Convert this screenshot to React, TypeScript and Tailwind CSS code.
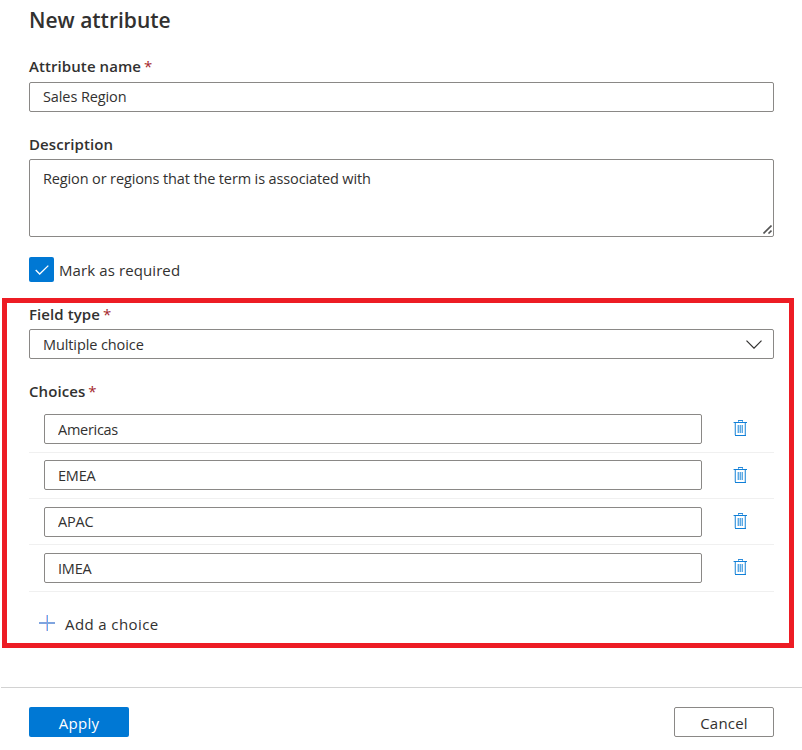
import React from 'react';

const label = "flex h-5 items-center whitespace-pre text-[15px] font-[560] tracking-[0.08px] text-[#323130]";
const field = "block w-full rounded-[2px] border border-[#8a8886] bg-white text-[14.5px] font-[370] text-[#323130] outline-none";

function Star() {
  return <span className="ml-[-1px] font-normal text-[#a4262c]"> *</span>;
}

function Trash() {
  return (
    <svg className="block h-4 w-[14px]" viewBox="0 0 14 16" shapeRendering="crispEdges">
      <path d="M5 0h5v1H5z" fill="#2b8bdb" />
      <path d="M5 1h1v1H5zM9 1h1v1H9z" fill="#69afe5" />
      <path d="M0 2h1v1H0z" fill="#9dcbef" />
      <path d="M1 2h13v1H1z" fill="#0f7fd8" />
      <path d="M1 3h1v12H1zM11 3h1v12h-1z" fill="#c5e0f5" />
      <path d="M2 3h1v12H2zM12 3h1v12h-1z" fill="#4da0e0" />
      <path d="M2 15h11v1H2z" fill="#0f7fd8" />
      <path d="M4 5h6v8H4z" fill="#b9daf4" />
      <path d="M5 5h1v8H5zM7 5h1v8H7zM9 5h1v8H9z" fill="#5ba9e4" />
    </svg>
  );
}

const choices = [
  { name: 'Americas', row: 'h-[39px]', icon: 'mt-[6px]', text: 'pt-px tracking-[-0.28px]' },
  { name: 'EMEA', row: 'h-[46px] pt-[7px]', icon: 'mt-[7px]', text: 'pt-px tracking-[-0.2px]' },
  { name: 'APAC', row: 'h-[46px] pt-[8px]', icon: 'mt-[6px]', text: 'pb-[2px] tracking-[-0.2px]' },
  { name: 'IMEA', row: 'h-[47px] pt-[8px]', icon: 'mt-[6px]', text: 'pt-px tracking-[-0.2px]' },
];

export default function App() {
  return (
    <main className="h-[750px] w-[802px] overflow-hidden bg-white font-['Open_Sans','Noto_Sans',sans-serif] text-[#323130]">
      <div className="h-[298px] pr-[28px] pl-[29px] pt-[5px]">
        <h1 className="h-[30px] text-[21px] leading-[30px] font-[550]">New attribute</h1>
        <div className={label + ' mt-[21px]'}>Attribute name<Star /></div>
        <input className={field + ' mt-[6px] h-[30px] px-[13px] pb-[2px] tracking-[-0.1px]'} defaultValue="Sales Region" />
        <div className={label + ' mt-[22px]'}>Description</div>
        <div className={field + ' relative mt-[5px] h-[78px] px-[13px] pt-[9px] leading-5 tracking-[-0.13px]'}>
          Region or regions that the term is associated with
          <svg className="absolute right-px bottom-[2px] h-[9px] w-[9px]" viewBox="0 0 9 9" stroke="#555" strokeWidth="1.6">
            <path d="M0.500 8.500l8-8M5.500 8.500l3-3" />
          </svg>
        </div>
        <div className="mt-5 flex h-[25px] items-center">
          <span className="flex size-[25px] items-center justify-center rounded-[2px] bg-[#0078d4]">
            <svg className="h-[10px] w-[14px]" viewBox="0 0 14 10" fill="none" stroke="white" strokeWidth="1.3"><path d="M0.700 5l4 4L13.300 0.600" /></svg>
          </span>
          <span className="ml-[5px] mt-[2px] text-[15px] font-[370] tracking-[0.1px]">Mark as required</span>
        </div>
      </div>

      <section className="ml-[2px] h-[350px] w-[792px] border-5 border-[#ed1c24] pr-[15px] pl-[22px]">
        <div className={label + ' mt-px'}>Field type<Star /></div>
        <div className={field + ' mt-[5px] flex h-[30px] items-center justify-between pr-[11px] pl-[13px] tracking-[-0.1px]'}>
          <span className="pt-[2px]">Multiple choice</span>
          <svg className="h-[9px] w-4" viewBox="0 0 16 9" fill="none" stroke="#323130" strokeWidth="1.2"><path d="M0.500 0.700L8 8.200 15.500 0.700" /></svg>
        </div>
        <div className={label + ' mt-[22px]'}>Choices<Star /></div>
        <div className="mt-[13px]">
          {choices.map((c) => (
            <div key={c.name} className={'flex items-start border-b border-[#f0f0f0] pl-[15px] ' + c.row}>
              <input className={field + ' h-[30px] max-w-[658px] px-[13px] ' + c.text} defaultValue={c.name} />
              <button className={'ml-[31px] shrink-0 ' + c.icon}><Trash /></button>
            </div>
          ))}
        </div>
        <button className="mt-[20px] flex h-[22px] items-center pl-[10px]">
          <svg className="h-4 w-4" viewBox="0 0 16 16" shapeRendering="crispEdges"><path d="M7 0h1v16H7z" fill="#e6bfe0" /><path d="M8 0h1v16H8z" fill="#62aef0" /><path d="M0 7h16v2H0z" fill="#7fa4df" /></svg>
          <span className="ml-[10px] mt-[2px] text-[15px] font-[370] tracking-[0.4px]">Add a choice</span>
        </button>
      </section>

      <footer className="mt-[39px] ml-px flex justify-between border-t border-[#d2d2d2] pt-[19px] pr-[28px] pl-[28px]">
        <button className="h-[30px] w-[100px] rounded-[2px] bg-[#0078d4] pt-[2px] text-[15px] leading-[28px] font-[530] tracking-[0.3px] text-white">Apply</button>
        <button className="h-[30px] w-[100px] rounded-[2px] border border-[#8a8886] pt-px text-[15px] leading-[28px] font-[370] tracking-[0.2px]">Cancel</button>
      </footer>
    </main>
  );
}
